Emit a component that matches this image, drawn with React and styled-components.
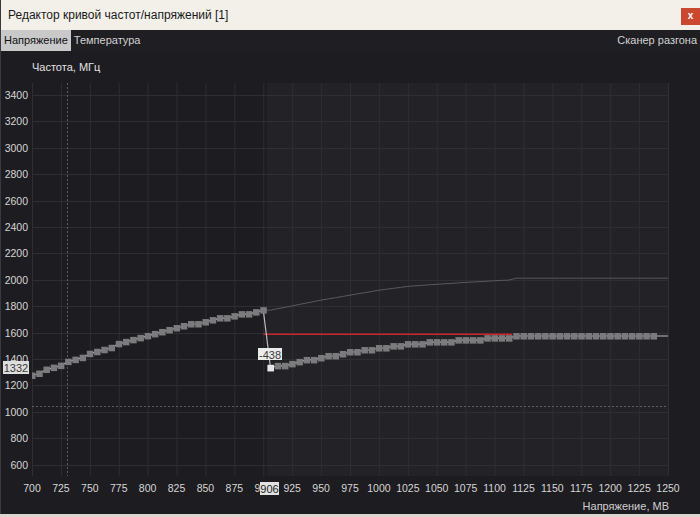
import React from 'react';
import styled, { createGlobalStyle } from 'styled-components';

const GlobalStyle = createGlobalStyle`
  html, body {
    margin: 0;
    padding: 0;
    background: #d9d5cd;
  }
  body {
    font-family: "Liberation Sans", Arial, sans-serif;
  }
`;

const Window = styled.div`
  width: 700px;
  height: 514px;
  box-sizing: border-box;
  border-left: 1px solid #3a3940;
  display: flex;
  flex-direction: column;
  background: #1d1c20;
  overflow: hidden;
`;

const TitleBar = styled.div`
  height: 30px;
  flex: none;
  display: flex;
  justify-content: space-between;
  align-items: flex-start;
  background: #f3f0ea;
  box-sizing: border-box;
  padding-left: 7px;
`;

const Title = styled.div`
  font-family: "Liberation Sans", Arial, sans-serif;
  font-size: 12px;
  color: #1a1a1a;
  line-height: 30px;
`;

const CloseButton = styled.div`
  width: 19px;
  height: 17px;
  margin-top: 8px;
  background: #c9482f;
  color: #fff;
  font-family: "Liberation Sans", Arial, sans-serif;
  font-size: 10px;
  font-weight: 700;
  line-height: 16px;
  text-align: center;
`;

const TabBar = styled.div`
  height: 21px;
  flex: none;
  display: flex;
  align-items: stretch;
  background: #1f1e22;
  font-family: "Liberation Sans", Arial, sans-serif;
  font-size: 11px;
`;

const Tab = styled.div`
  padding: 0 3px 0 3px;
  line-height: 21px;
  background: ${p => (p.$active ? '#c9c9c9' : 'transparent')};
  color: ${p => (p.$active ? '#111' : '#d2d2d2')};
`;

const Spacer = styled.div`
  flex: 1;
`;

const Content = styled.div`
  flex: 1;
  display: flex;
  flex-direction: column;
`;

const AxisTitle = styled.div`
  height: 29px;
  box-sizing: border-box;
  padding: 10px 0 0 31px;
  font-family: "Liberation Sans", Arial, sans-serif;
  font-size: 11px;
  line-height: 13px;
  color: #e2e2e2;
`;

const ChartSvg = styled.svg`
  display: block;
  flex: none;
`;

const XAxisTitle = styled.div`
  height: 17px;
  padding-right: 31px;
  text-align: right;
  font-family: "Liberation Sans", Arial, sans-serif;
  font-size: 11px;
  line-height: 17px;
  color: #cfcfcf;
`;

const AxisLabel = styled.text`
  font-family: "Liberation Sans", Arial, sans-serif;
  font-size: 10.5px;
  fill: #d6d6d6;
`;

const TipText = styled.text`
  font-family: "Liberation Sans", Arial, sans-serif;
  font-size: 11px;
  fill: ${p => p.$color || '#3a3a3a'};
`;

// chart geometry: svg starts at page x = 1, y = 80
const W = 699;
const H = 418;
const PL = 31;
const PR = 667;
const PT = 3;
const PB = 396;
const X = v => PL + ((v - 700) * (PR - PL)) / 550;
const Y = f => 15 + (3400 - f) * 0.132;
const q = f => Math.round(f / 15) * 15;

const OFFSET = -438;

const leftPts = [];
for (let i = 0; i <= 32; i++) {
  const v = 700 + i * 6.25;
  const t = (v - 700) / 200;
  leftPts.push([v, q(1271 + 493 * (t + 0.45 * t * (1 - t)))]);
}

// original curve above 900 mV, read off the screen
const knots = [
  [906.25, 1770],
  [950, 1846],
  [1000, 1921],
  [1025, 1950],
  [1050, 1966],
  [1075, 1980],
  [1100, 1993],
  [1112.5, 1998],
  [1118.75, 2012],
];

const base = v => {
  if (v >= 1118.75) return 2012;
  for (let i = 1; i < knots.length; i++) {
    const [v0, f0] = knots[i - 1];
    const [v1, f1] = knots[i];
    if (v <= v1) return f0 + ((f1 - f0) * (v - v0)) / (v1 - v0);
  }
  return 2012;
};

const rightPts = [];
for (let v = 906.25; v <= 1250.01; v += 6.25) {
  const f = base(v);
  rightPts.push([v, v >= 1118.75 ? f + OFFSET : q(f + OFFSET + 2) - 2]);
}

const basePts = [[900, leftPts[32][1]]];
for (let v = 906.25; v <= 1250.01; v += 6.25) basePts.push([v, base(v)]);

const toPath = pts => pts.map(([v, f]) => `${X(v).toFixed(1)},${Y(f).toFixed(1)}`).join(' ');

const xTicks = [];
for (let v = 700; v <= 1250; v += 25) xTicks.push(v);
const yTicks = [];
for (let f = 3400; f >= 600; f -= 200) yTicks.push(f);

function CurveChart() {
  const shadeX = X(903);
  const allPts = [...leftPts, ...rightPts];
  const squares = allPts.filter(([v]) => v <= 1237.6);
  const sel = rightPts[0];

  return (
    <ChartSvg width={W} height={H} viewBox={`0 0 ${W} ${H}`}>
      <defs>
        <clipPath id="plot">
          <rect x={PL} y={PT} width={PR - PL} height={PB - PT} />
        </clipPath>
      </defs>

      <rect x={shadeX} y={PT} width={PR - shadeX} height={PB - PT} fill="#232227" />

      {xTicks.map(v => (
        <line key={v} x1={X(v) + 0.5} x2={X(v) + 0.5} y1={PT} y2={PB} stroke="#2f2e34" />
      ))}
      {yTicks.map(f => (
        <line key={f} x1={PL} x2={PR} y1={Math.round(Y(f)) + 0.5} y2={Math.round(Y(f)) + 0.5} stroke="#2f2e34" />
      ))}

      <line x1={66.5} x2={66.5} y1={PT} y2={PB} stroke="#5c5b60" strokeDasharray="2 2" />
      <line x1={PL} x2={PR} y1={326.5} y2={326.5} stroke="#5c5b60" strokeDasharray="2 2" />

      <g clipPath="url(#plot)">
        <polyline points={toPath(basePts)} fill="none" stroke="#5a595e" strokeWidth="1" />
        <line x1={X(900)} x2={X(1115)} y1={Y(1587)} y2={Y(1587)} stroke="#c8262c" strokeWidth="1.5" />
        <polyline points={toPath(allPts)} fill="none" stroke="#bdbdbd" strokeWidth="1.2" />
        {squares.map(([v, f]) => (
          <rect key={v} x={X(v) - 3} y={Y(f) - 3} width="6.5" height="6.5" fill="#7b7b7d" />
        ))}
        <rect x={X(sel[0]) - 3} y={Y(sel[1]) - 3} width="6.5" height="6.5" fill="#e8e8e8" />
      </g>

      {yTicks.map(f => (
        <AxisLabel key={f} x={27} y={Y(f)} textAnchor="end" dominantBaseline="central">
          {f}
        </AxisLabel>
      ))}
      {xTicks.map(v => (
        <AxisLabel key={v} x={X(v)} y={408} textAnchor="middle" dominantBaseline="central">
          {v}
        </AxisLabel>
      ))}

      <rect x={257} y={268} width={24} height={12} fill="#ebebeb" />
      <TipText x={269} y={274.5} textAnchor="middle" dominantBaseline="central">-438</TipText>

      <rect x={2} y={281} width={26} height={13} fill="#dedede" />
      <TipText x={15} y={288} textAnchor="middle" dominantBaseline="central">1332</TipText>

      <rect x={259} y={402} width={19} height={13} fill="#e2e2e2" />
      <TipText x={268.5} y={408.5} textAnchor="middle" dominantBaseline="central" $color="#222">
        906
      </TipText>
    </ChartSvg>
  );
}

export default function App() {
  return (
    <>
      <GlobalStyle />
      <Window>
        <TitleBar>
          <Title>Редактор кривой частот/напряжений [1]</Title>
          <CloseButton>x</CloseButton>
        </TitleBar>
        <TabBar>
          <Tab $active>Напряжение</Tab>
          <Tab>Температура</Tab>
          <Spacer />
          <Tab>Сканер разгона</Tab>
        </TabBar>
        <Content>
          <AxisTitle>Частота, МГц</AxisTitle>
          <CurveChart />
          <XAxisTitle>Напряжение, МВ</XAxisTitle>
        </Content>
      </Window>
    </>
  );
}
